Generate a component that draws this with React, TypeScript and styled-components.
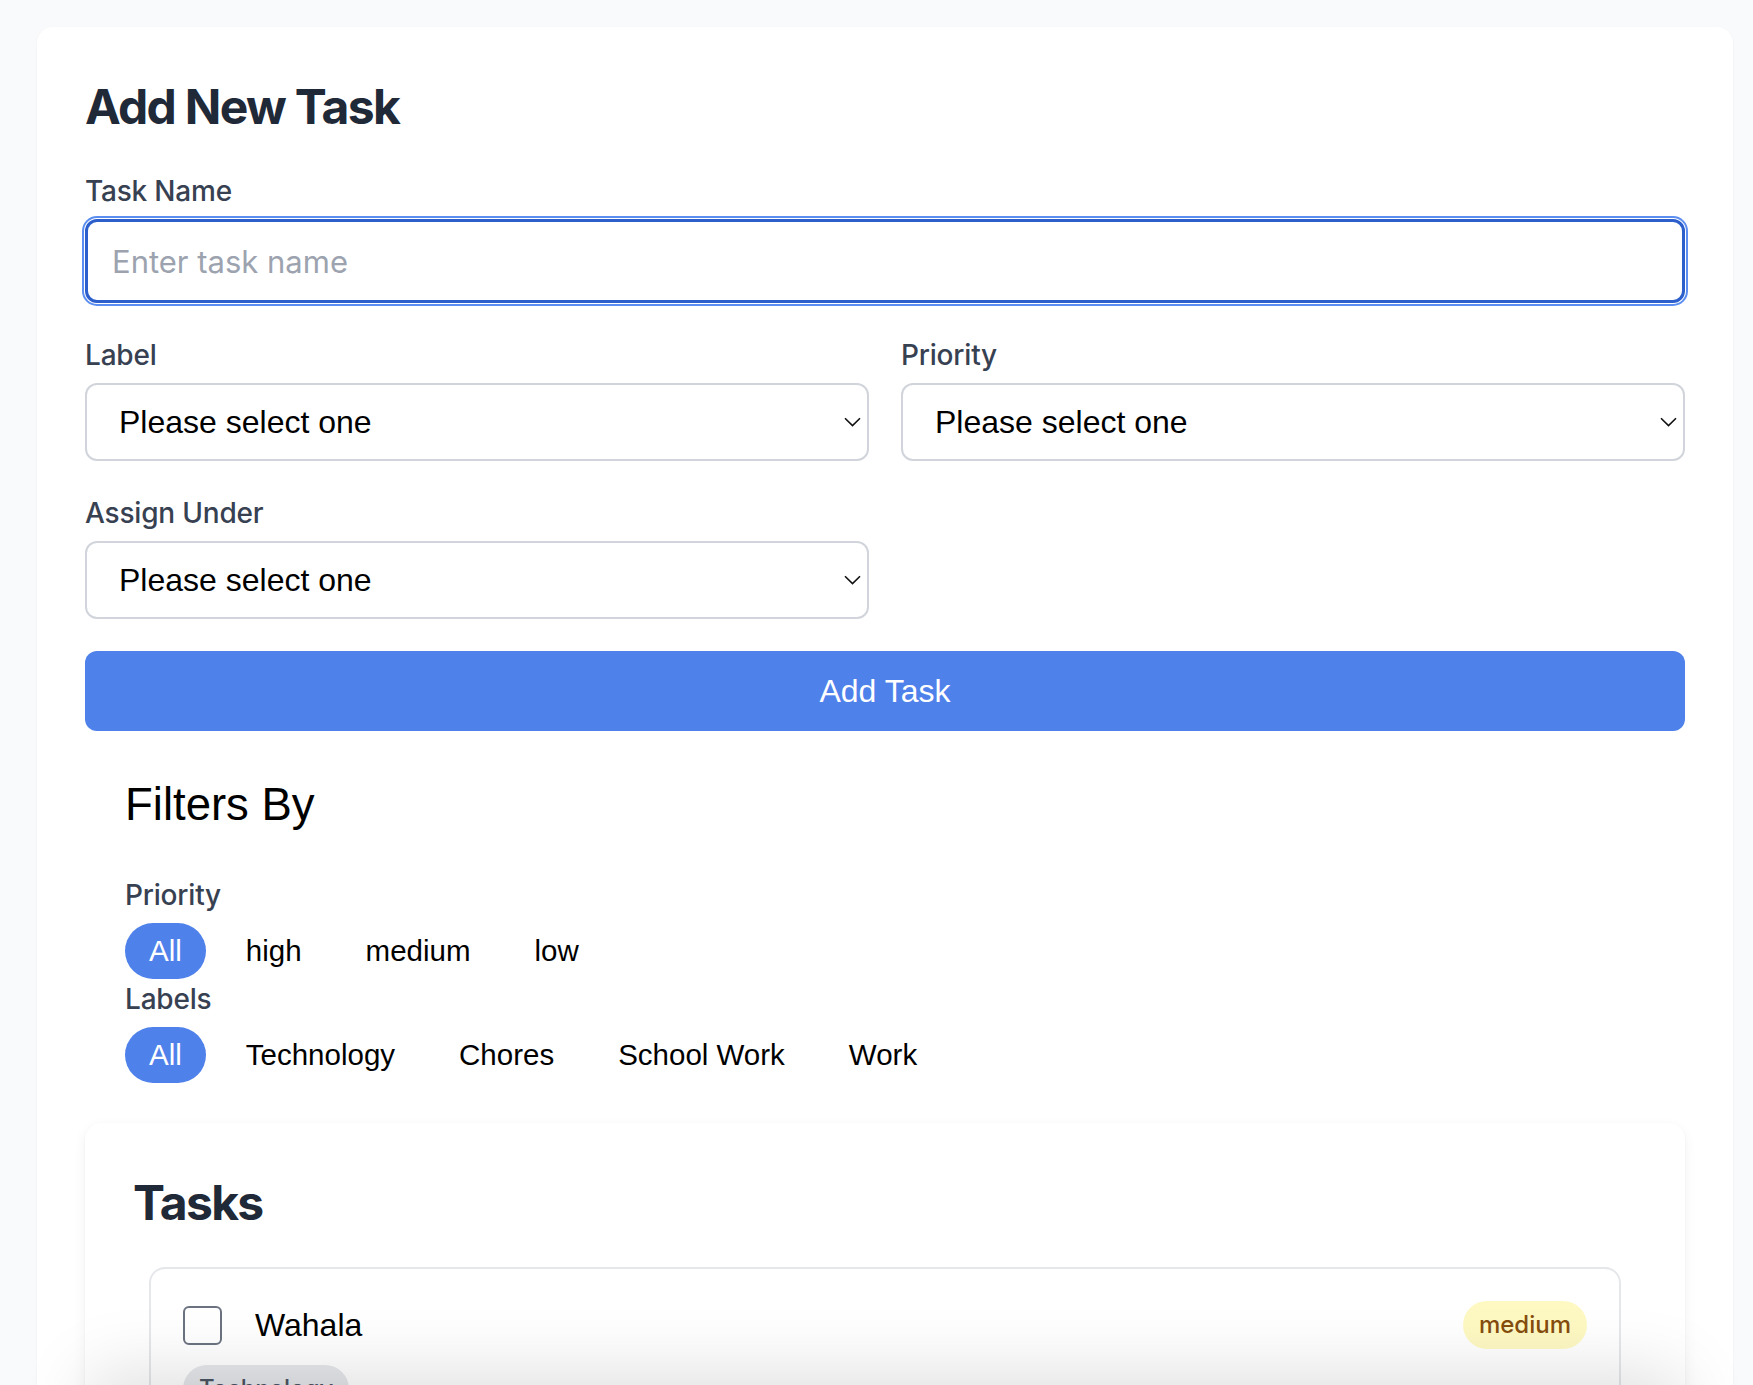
import React from 'react'
import styled, { createGlobalStyle } from 'styled-components'

const GlobalStyle = createGlobalStyle`
  * {
    box-sizing: border-box;
  }
  body {
    margin: 0;
    background: #f9fafb;
    font-family: 'Liberation Sans', Arial, sans-serif;
    line-height: 1.5;
  }
`

const Page = styled.div`
  padding: 27px 20px 0 37px;
  min-height: 100vh;
`

const FormCard = styled.div`
  background: #ffffff;
  border-radius: 16px;
  padding: 48px 48px 0;
  min-height: 1400px;
  box-shadow: 0 1px 3px rgba(0, 0, 0, 0.05);
`

const Heading = styled.h2`
  margin: 0 0 32px;
  font-family: Inter, 'Noto Sans', sans-serif;
  font-size: 48px;
  line-height: 64px;
  font-weight: 700;
  letter-spacing: -1.7px;
  color: #1f2937;
`

const Field = styled.div`
  display: flex;
  flex-flow: column nowrap;
`

const FieldLabel = styled.label`
  display: block;
  margin-bottom: 8px;
  font-family: Inter, 'Noto Sans', sans-serif;
  font-size: 28px;
  line-height: 40px;
  font-weight: 500;
  letter-spacing: -0.2px;
  color: #374151;
`

const TextInput = styled.input`
  width: 100%;
  height: 84px;
  padding: 0 24px;
  border: 3px solid #2c5fcb;
  border-radius: 12px;
  outline: none;
  box-shadow: 0 0 0 1px #ffffff, 0 0 0 3px #5b8ef0;
  font-family: Inter, 'Noto Sans', sans-serif;
  font-size: 31px;
  color: #111827;
  margin-bottom: 32px;

  &::placeholder {
    color: #9ca3af;
  }
`

const FieldGrid = styled.div`
  display: grid;
  grid-template-columns: 1fr 1fr;
  column-gap: 32px;
  row-gap: 32px;
  margin-bottom: 32px;
`

const SelectWrap = styled.div`
  position: relative;
`

const Select = styled.select`
  width: 100%;
  height: 78px;
  padding: 0 48px 0 32px;
  border: 2px solid #d1d5db;
  border-radius: 12px;
  background: #ffffff;
  appearance: none;
  outline: none;
  font-family: 'Liberation Sans', Arial, sans-serif;
  font-size: 32px;
  color: #000000;
`

const Chevron = styled.svg`
  position: absolute;
  right: 8px;
  top: 50%;
  transform: translateY(-50%);
  pointer-events: none;
`

const SubmitButton = styled.button`
  width: 100%;
  height: 80px;
  border: none;
  border-radius: 12px;
  background: #4f81eb;
  color: #ffffff;
  font-family: 'Liberation Sans', Arial, sans-serif;
  font-size: 32px;
  cursor: pointer;
`

const FilterSection = styled.div`
  padding: 39px 40px 40px;
`

const FilterTitle = styled.h2`
  margin: 0 0 36px;
  font-family: 'Liberation Sans', Arial, sans-serif;
  font-size: 45.5px;
  line-height: 69px;
  font-weight: 400;
  color: #000000;
`

const FilterLabel = styled.div`
  margin-bottom: 8px;
  font-family: Inter, 'Noto Sans', sans-serif;
  font-size: 28px;
  line-height: 40px;
  font-weight: 500;
  letter-spacing: -0.2px;
  color: #374151;
`

const PillRow = styled.div`
  display: flex;
  flex-flow: row nowrap;
  gap: 16px;
`

const Pill = styled.button<{ $active?: boolean }>`
  display: flex;
  align-items: center;
  height: 56px;
  padding: 0 24px;
  border: none;
  border-radius: 9999px;
  background: ${(p) => (p.$active ? '#4f81eb' : 'transparent')};
  color: ${(p) => (p.$active ? '#ffffff' : '#000000')};
  font-family: 'Liberation Sans', Arial, sans-serif;
  font-size: 29.5px;
  cursor: pointer;
`

const TasksCard = styled.div`
  background: #ffffff;
  border-radius: 16px;
  padding: 48px;
  box-shadow: 0 4px 14px rgba(0, 0, 0, 0.05), 0 1px 3px rgba(0, 0, 0, 0.04);
`

const TaskList = styled.div`
  padding: 0 16px;
`

const TaskItem = styled.div`
  border: 2px solid #e5e7eb;
  border-radius: 16px;
  padding: 32px;
`

const TaskRow = styled.div`
  display: flex;
  justify-content: space-between;
  align-items: center;
`

const TaskLeft = styled.div`
  display: flex;
  align-items: center;
  gap: 33px;
`

const Checkbox = styled.span`
  display: block;
  width: 39px;
  height: 39px;
  border: 2px solid #6b7280;
  border-radius: 6px;
  background: #ffffff;
`

const TaskName = styled.span`
  font-family: 'Liberation Sans', Arial, sans-serif;
  font-size: 32px;
  color: #000000;
`

const Badge = styled.span<{ $tone: 'yellow' | 'gray' }>`
  display: inline-block;
  padding: 8px 16px;
  border-radius: 9999px;
  font-family: Inter, 'Noto Sans', sans-serif;
  font-size: 24px;
  line-height: 32px;
  font-weight: 500;
  background: ${(p) => (p.$tone === 'yellow' ? '#fef9c3' : '#e5e7eb')};
  color: ${(p) => (p.$tone === 'yellow' ? '#854d0e' : '#4b5563')};
`

const TagRow = styled.div`
  margin-top: 16px;
  display: flex;
  gap: 16px;
`

const BottomFade = styled.div`
  position: fixed;
  left: 95px;
  width: 1580px;
  top: 100vh;
  height: 120px;
  background: #ffffff;
  box-shadow: 0 -6px 70px 6px rgba(0, 0, 0, 0.13);
  pointer-events: none;
`

const priorities = ['All', 'high', 'medium', 'low']
const labels = ['All', 'Technology', 'Chores', 'School Work', 'Work']

const SelectField = ({ label }: { label?: string }) => (
  <Field>
    {label && <FieldLabel>{label}</FieldLabel>}
    <SelectWrap>
      <Select defaultValue="">
        <option value="">Please select one</option>
      </Select>
      <Chevron width="17" height="10" viewBox="0 0 17 10">
        <path d="M1 1.2 L8.5 8.6 L16 1.2" fill="none" stroke="#111" strokeWidth="1.6" />
      </Chevron>
    </SelectWrap>
  </Field>
)

const App = () => {
  const [priority, setPriority] = React.useState('All')
  const [labelFilter, setLabelFilter] = React.useState('All')

  return (
    <Page>
      <GlobalStyle />
      <FormCard>
        <Heading>Add New Task</Heading>
        <Field>
          <FieldLabel>Task Name</FieldLabel>
          <TextInput placeholder="Enter task name" />
        </Field>
        <FieldGrid>
          <SelectField label="Label" />
          <SelectField label="Priority" />
          <SelectField label="Assign Under" />
        </FieldGrid>
        <SubmitButton>Add Task</SubmitButton>

        <FilterSection>
          <FilterTitle>Filters By</FilterTitle>
          <FilterLabel>Priority</FilterLabel>
          <PillRow>
            {priorities.map((p) => (
              <Pill key={p} $active={priority === p} onClick={() => setPriority(p)}>
                {p}
              </Pill>
            ))}
          </PillRow>
          <FilterLabel>Labels</FilterLabel>
          <PillRow>
            {labels.map((l) => (
              <Pill key={l} $active={labelFilter === l} onClick={() => setLabelFilter(l)}>
                {l}
              </Pill>
            ))}
          </PillRow>
        </FilterSection>

        <TasksCard>
          <Heading>Tasks</Heading>
          <TaskList>
            <TaskItem>
              <TaskRow>
                <TaskLeft>
                  <Checkbox />
                  <TaskName>Wahala</TaskName>
                </TaskLeft>
                <Badge $tone="yellow">medium</Badge>
              </TaskRow>
              <TagRow>
                <Badge $tone="gray">Technology</Badge>
              </TagRow>
            </TaskItem>
          </TaskList>
        </TasksCard>
      </FormCard>
      <BottomFade />
    </Page>
  )
}

export default App
